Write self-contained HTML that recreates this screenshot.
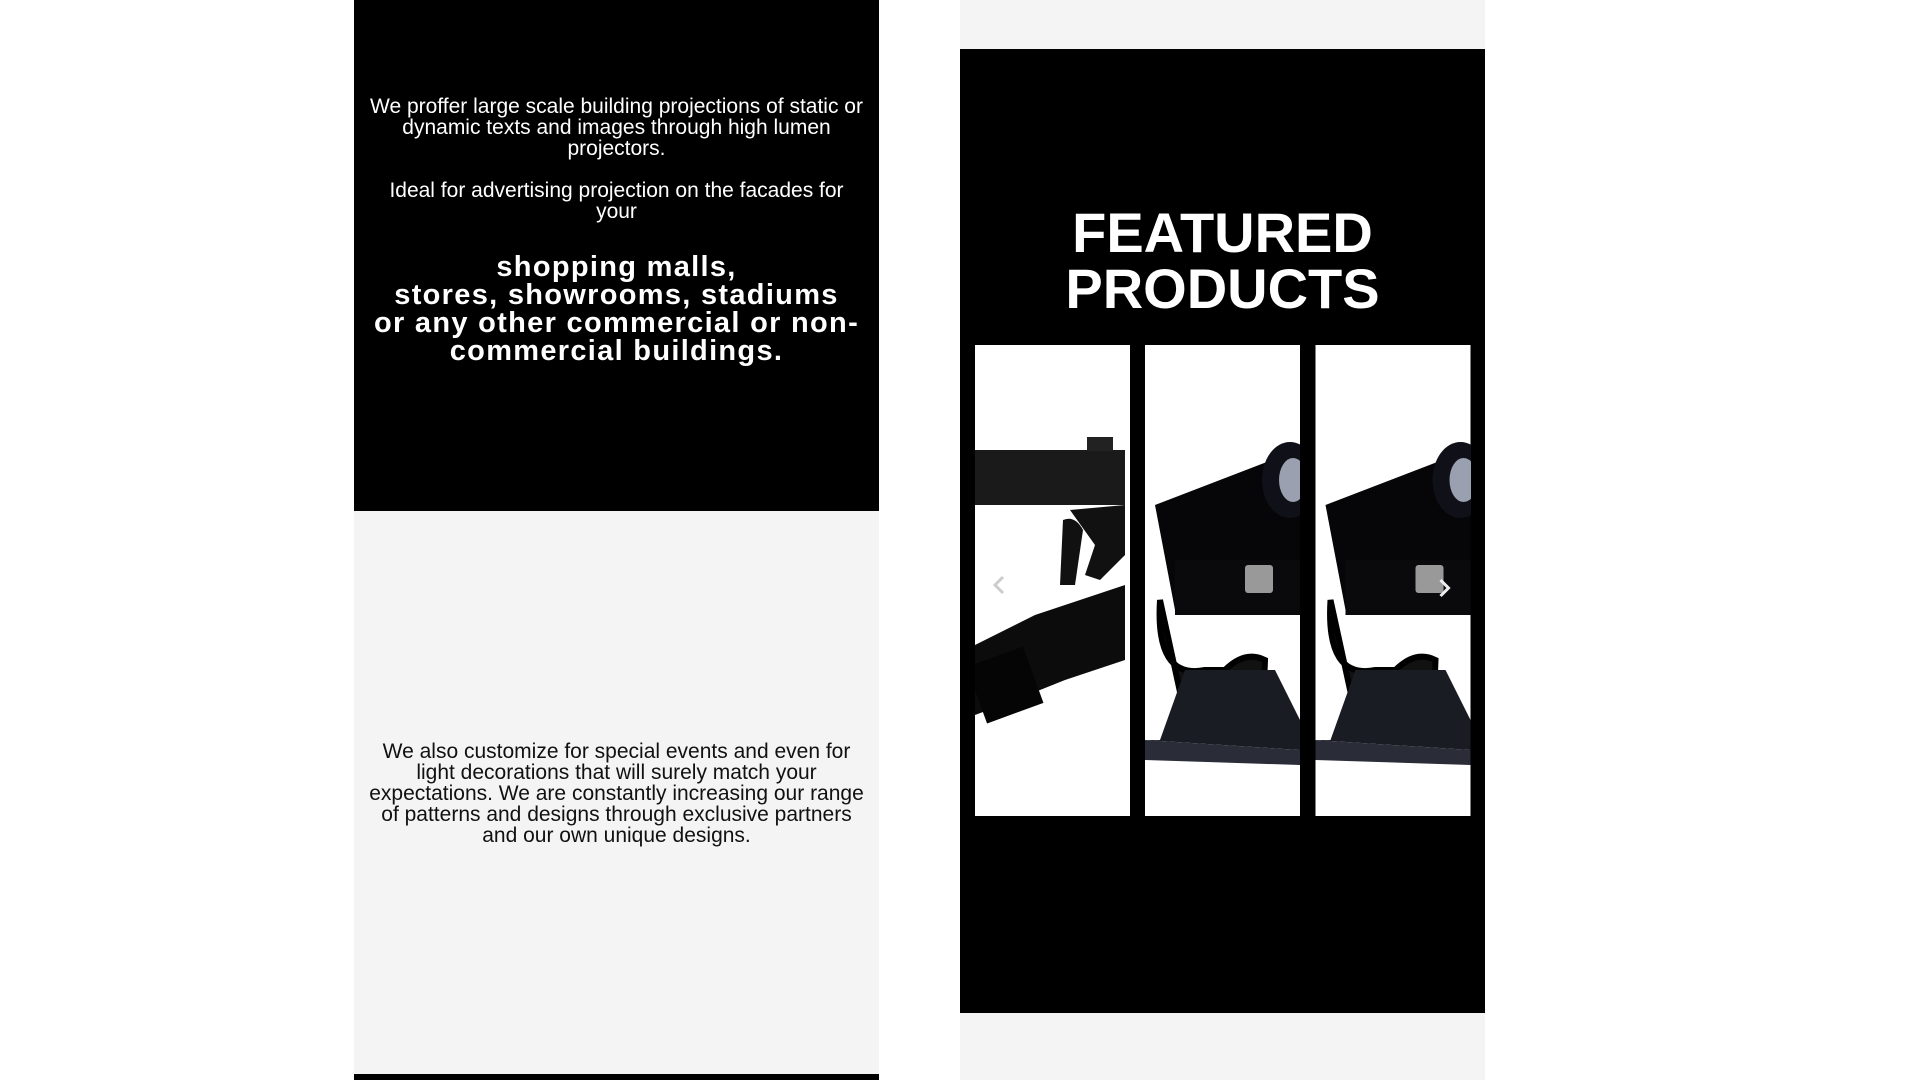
<!DOCTYPE html>
<html><head><meta charset="utf-8"><style>
*{margin:0;padding:0;box-sizing:border-box}
body{width:1920px;height:1080px;background:#fff;position:relative;overflow:hidden;font-family:"Liberation Sans",Arial,sans-serif}
.a{position:absolute}
.c{text-align:center;white-space:nowrap}
</style></head><body>
<div class="a" style="left:354px;top:0;width:525px;height:511px;background:#000"></div>
<div class="a" style="left:354px;top:511px;width:525px;height:563px;background:#f4f4f4"></div>
<div class="a" style="left:354px;top:1074px;width:525px;height:6px;background:#000"></div>

<div class="a c" style="left:354px;width:525px;top:96px;color:#fff;font-size:21px;line-height:21px">We proffer large scale building projections of static or<br>dynamic texts and images through high lumen<br>projectors.</div>
<div class="a c" style="left:354px;width:525px;top:180px;color:#fff;font-size:21px;line-height:21px">Ideal for advertising projection on the facades for<br>your</div>
<div class="a c" style="left:354px;width:525px;top:253px;color:#fff;font-size:29px;line-height:28px;font-weight:bold;letter-spacing:1.3px">shopping malls,<br>stores, showrooms, stadiums<br>or any other commercial or non-<br>commercial buildings.</div>

<div class="a c" style="left:354px;width:525px;top:741px;color:#111;font-size:21px;line-height:21px">We also customize for special events and even for<br>light decorations that will surely match your<br>expectations. We are constantly increasing our range<br>of patterns and designs through exclusive partners<br>and our own unique designs.</div>

<div class="a" style="left:960px;top:0;width:525px;height:49px;background:#f4f4f4"></div>
<div class="a" style="left:960px;top:49px;width:525px;height:964px;background:#000"></div>
<div class="a" style="left:960px;top:1013px;width:525px;height:67px;background:#f4f4f4"></div>

<div class="a c" style="left:960px;width:525px;top:205px;color:#fff;font-size:56px;line-height:56px;font-weight:bold">FEATURED<br>PRODUCTS</div>

<svg class="a" style="left:975px;top:345px" width="155" height="471" viewBox="0 0 155 471">
<rect width="155" height="471" fill="#fff"/>
<rect x="0" y="105" width="150" height="55" fill="#1a1a1a"/>
<rect x="112" y="92" width="26" height="14" fill="#222"/>
<path d="M95 165 L150 160 L150 210 L125 235 L110 230 L120 200 Z" fill="#111"/>
<path d="M88 175 Q100 170 108 185 L100 240 L85 240 Z" fill="#111"/>
<path d="M0 300 L60 270 L150 240 L150 315 L90 335 L40 355 L0 370 Z" fill="#0c0c0c"/>
<rect x="0" y="310" width="60" height="60" fill="#050505" transform="rotate(-20 30 340)"/>
<path d="M28 232 l-8 8 8 8" stroke="#ccc" stroke-width="3" fill="none"/>
</svg>

<svg class="a" style="left:1145px;top:345px" width="155" height="471" viewBox="0 0 155 471">
<rect width="155" height="471" fill="#fff"/>
<g transform="translate(0,85)">
<path d="M10 75 L140 25 L155 20 L155 170 L30 180 Z" fill="#060608"/>
<ellipse cx="145" cy="50" rx="28" ry="38" fill="#101018"/>
<ellipse cx="148" cy="50" rx="14" ry="22" fill="#9aa0b0"/>
<rect x="30" y="130" width="125" height="55" fill="#0a0a0c"/>
<rect x="100" y="135" width="28" height="28" fill="#999" rx="3"/>
<path d="M15 170 Q10 250 60 240 L80 240 Q100 220 120 230 L118 280 L40 285 Z" fill="#111" stroke="#000" stroke-width="6"/>
<path d="M15 310 L40 240 L130 240 L155 290 L155 320 L0 310 Z" fill="#1a1c24"/>
<path d="M0 310 L155 320 L155 335 L0 330 Z" fill="#2a2d38"/>
</g>
</svg>

<svg class="a" style="left:1315px;top:345px" width="156" height="471" viewBox="0 0 155 471">
<rect width="155" height="471" fill="#fff"/>
<g transform="translate(0,85)">
<path d="M10 75 L140 25 L155 20 L155 170 L30 180 Z" fill="#060608"/>
<ellipse cx="145" cy="50" rx="28" ry="38" fill="#101018"/>
<ellipse cx="148" cy="50" rx="14" ry="22" fill="#9aa0b0"/>
<rect x="30" y="130" width="125" height="55" fill="#0a0a0c"/>
<rect x="100" y="135" width="28" height="28" fill="#999" rx="3"/>
<path d="M15 170 Q10 250 60 240 L80 240 Q100 220 120 230 L118 280 L40 285 Z" fill="#111" stroke="#000" stroke-width="6"/>
<path d="M15 310 L40 240 L130 240 L155 290 L155 320 L0 310 Z" fill="#1a1c24"/>
<path d="M0 310 L155 320 L155 335 L0 330 Z" fill="#2a2d38"/>
<path d="M125 150 l8 8 -8 8" stroke="#eee" stroke-width="3" fill="none"/>
</g>
</svg>
</body></html>
